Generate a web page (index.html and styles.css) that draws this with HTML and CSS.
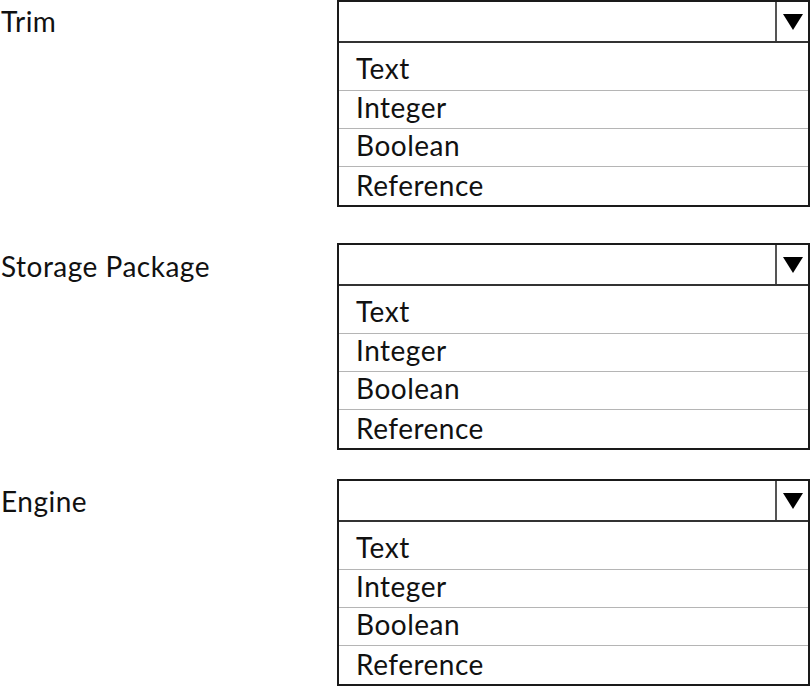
FILE: index.html
```html
<!DOCTYPE html>
<html>
<head>
<meta charset="utf-8">
<link rel="stylesheet" href="styles.css">
</head>
<body>
<div class="page">
  <section class="field field-trim">
    <div class="label">Trim</div>
    <div class="combo">
      <div class="combo-head">
        <div class="combo-value"></div>
        <div class="combo-btn"><svg width="20" height="16" viewBox="0 0 20 16"><polygon points="0,0 20,0 10,16" fill="#000"/></svg></div>
      </div>
      <ul class="options">
        <li class="opt first">Text</li>
        <li class="opt">Integer</li>
        <li class="opt">Boolean</li>
        <li class="opt last">Reference</li>
      </ul>
    </div>
  </section>
  <section class="field field-storage">
    <div class="label">Storage Package</div>
    <div class="combo">
      <div class="combo-head">
        <div class="combo-value"></div>
        <div class="combo-btn"><svg width="20" height="16" viewBox="0 0 20 16"><polygon points="0,0 20,0 10,16" fill="#000"/></svg></div>
      </div>
      <ul class="options">
        <li class="opt first">Text</li>
        <li class="opt">Integer</li>
        <li class="opt">Boolean</li>
        <li class="opt last">Reference</li>
      </ul>
    </div>
  </section>
  <section class="field field-engine">
    <div class="label">Engine</div>
    <div class="combo">
      <div class="combo-head">
        <div class="combo-value"></div>
        <div class="combo-btn"><svg width="20" height="16" viewBox="0 0 20 16"><polygon points="0,0 20,0 10,16" fill="#000"/></svg></div>
      </div>
      <ul class="options">
        <li class="opt first">Text</li>
        <li class="opt">Integer</li>
        <li class="opt">Boolean</li>
        <li class="opt last">Reference</li>
      </ul>
    </div>
  </section>
</div>
</body>
</html>
```

FILE: styles.css
```css
html, body {
  margin: 0;
  padding: 0;
  background: #fff;
}
body {
  font-family: "Lato", "Open Sans", sans-serif;
  color: #111;
  font-size: 28px;
  letter-spacing: 0.5px;
}
.page {
  display: flex;
  flex-direction: column;
  width: 811px;
}
.field {
  display: flex;
  align-items: flex-start;
}
.field-storage { margin-top: 36px; }
.field-engine { margin-top: 29px; }
.label {
  width: 337px;
  padding-left: 1px;
  box-sizing: border-box;
  line-height: 30px;
}
.field-trim .label { padding-top: 6px; }
.field-storage .label { padding-top: 8px; }
.field-engine .label { padding-top: 7px; }
.combo {
  width: 473px;
  border: 2px solid #1a1a1a;
  box-sizing: border-box;
}
.combo-head {
  display: flex;
  height: 39px;
  border-bottom: 2px solid #333;
}
.combo-value { flex: 1; }
.combo-btn {
  width: 33px;
  border-left: 2px solid #555;
  display: flex;
  justify-content: center;
  padding-top: 12px;
  box-sizing: border-box;
}
.options {
  list-style: none;
  margin: 0;
  padding: 0;
}
.opt {
  height: 37px;
  line-height: 33px;
  padding-left: 17px;
  border-bottom: 1px solid #b5b5b5;
}
.opt.first {
  height: 38px;
  padding-top: 9px;
}
.opt.last {
  height: 36px;
  padding-top: 2px;
  border-bottom: none;
}
```
